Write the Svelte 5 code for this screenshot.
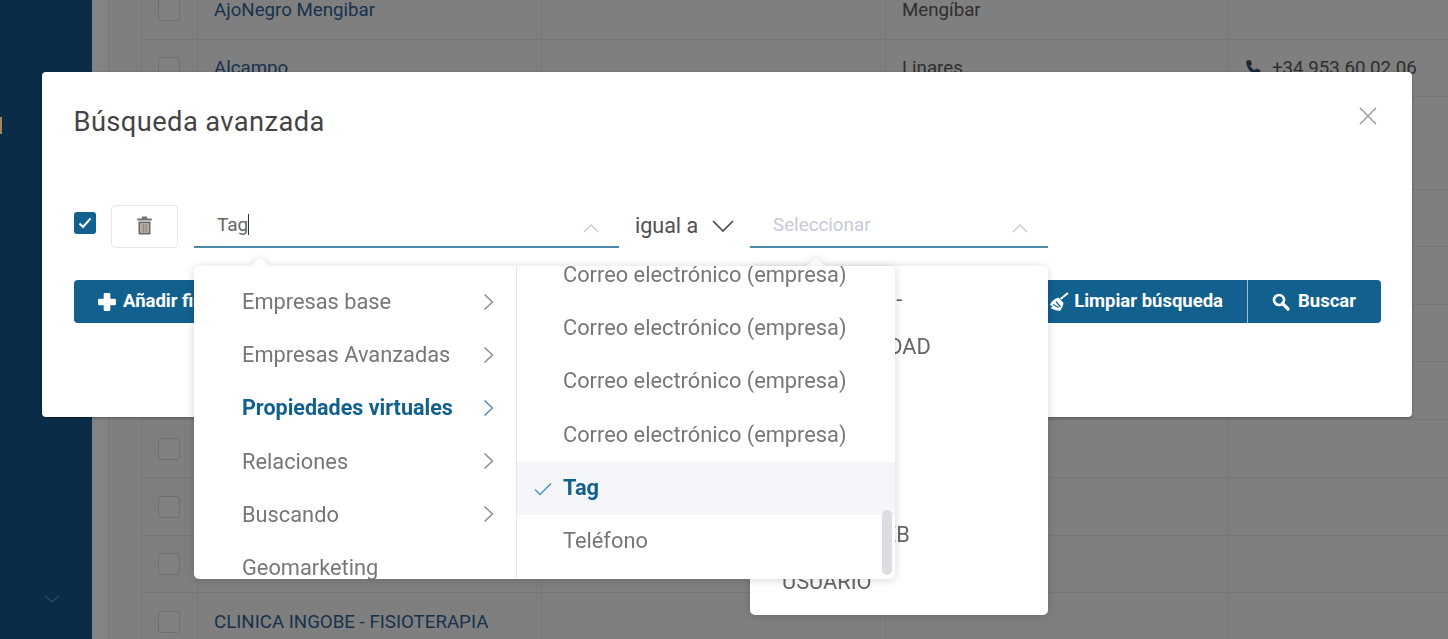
<script>
  const rows = [
    { h: 60, name: 'AjoNegro Mengibar', city: 'Mengíbar' },
    { h: 57, name: 'Alcampo', city: 'Linares', phone: '+34 953 60 02 06' },
    { h: 93 }, { h: 57 }, { h: 58 }, { h: 57 }, { h: 58 }, { h: 58 }, { h: 58 }, { h: 57 },
    { h: 58, name: 'CLINICA INGOBE - FISIOTERAPIA' }
  ];
  const groups = [
    { label: 'Empresas base', arrow: true },
    { label: 'Empresas Avanzadas', arrow: true },
    { label: 'Propiedades virtuales', arrow: true, active: true },
    { label: 'Relaciones', arrow: true },
    { label: 'Buscando', arrow: true },
    { label: 'Geomarketing', arrow: false }
  ];
  const fields = [
    { label: 'Correo electrónico (empresa)' },
    { label: 'Correo electrónico (empresa)' },
    { label: 'Correo electrónico (empresa)' },
    { label: 'Correo electrónico (empresa)' },
    { label: 'Tag', selected: true },
    { label: 'Teléfono' }
  ];
  const backOptions = ['EMPRESA   -', 'ÁREA ENTIDAD', 'NOMBRE', 'CIUDAD', 'PAÍS', 'PÁGINA WEB', 'USUARIO'];
</script>

<div class="page">
  <aside class="sidebar">
    <span class="mark"></span>
    <svg class="side-chevron" viewBox="0 0 16 8" width="16" height="8"><path d="M1 1l7 6 7-6" fill="none" stroke="#2f4c63" stroke-width="1.3"/></svg>
  </aside>
  <div class="gutter"></div>
  <main class="content">
    <div class="table">
      {#each rows as r}
        <div class="row" style="height:{r.h}px">
          <div class="cell check"><span class="box"></span></div>
          <div class="cell name">{r.name ?? ''}</div>
          <div class="cell"></div>
          <div class="cell city">{r.city ?? ''}</div>
          <div class="cell phone">
            {#if r.phone}
              <svg viewBox="0 0 16 16" width="18" height="18"><path d="M3.2 1l2.6 0 1.3 3.6-1.6 1.5c.8 1.7 2.2 3.1 3.9 3.9l1.5-1.6 3.6 1.3 0 2.6c-.3 1-1.2 1.6-2.2 1.5C6.6 13.3 2.700 9.400 2 3.200 1.900 2.200 2.300 1.300 3.200 1z" fill="#1d2a36"/></svg>
              <span>{r.phone}</span>
            {/if}
          </div>
        </div>
      {/each}
    </div>
  </main>

  <section class="modal">
    <h1>Búsqueda avanzada</h1>
    <svg class="close" viewBox="0 0 18 18" width="18" height="18"><path d="M1 1l16 16M17 1L1 17" stroke="#9a9ca0" stroke-width="1.5" fill="none"/></svg>

    <div class="filter">
      <span class="tick">
        <svg viewBox="0 0 14 12" width="14" height="12"><path d="M1.500 6.500l3.500 3.500 7.500-8.500" fill="none" stroke="#fff" stroke-width="2"/></svg>
      </span>
      <button class="trash" aria-label="Eliminar">
        <svg viewBox="0 0 15 19" width="15" height="19">
          <path d="M5.200 0.500h4.600l.7 2H14.800v2H.2v-2h4.300z" fill="#77716c"/>
          <path fill-rule="evenodd" d="M1.500 5.500h12v12a1 1 0 0 1-1 1h-10a1 1 0 0 1-1-1zM3.500 7.500v9h8v-9z" fill="#6d6a68"/>
          <path d="M3.500 7.500h8v9h-8z" fill="#b0a8a0"/>
          <path d="M6 7.500h1v9H6zM8.500 7.500h1v9h-1z" fill="#8b8682"/>
        </svg>
      </button>
      <div class="input tag-input">
        <span class="value">Tag<i class="caret"></i></span>
        <svg class="chev" viewBox="0 0 16 9" width="16" height="9"><path d="M1 8l7-7 7 7" fill="none" stroke="#c9ccd2" stroke-width="1.400"/></svg>
      </div>
      <div class="operator">
        <span>igual a</span>
        <svg viewBox="0 0 22 12" width="22" height="12"><path d="M1 1l10 10L21 1" fill="none" stroke="#4a4a4a" stroke-width="1.700"/></svg>
      </div>
      <div class="input sel-input">
        <span class="placeholder">Seleccionar</span>
        <svg class="chev" viewBox="0 0 16 9" width="16" height="9"><path d="M1 8l7-7 7 7" fill="none" stroke="#c9ccd2" stroke-width="1.400"/></svg>
      </div>
    </div>

    <div class="actions">
      <button class="btn add">
        <svg viewBox="0 0 18 18" width="20" height="20"><path d="M7 1h4a1 1 0 0 1 1 1v4h4a1 1 0 0 1 1 1v4a1 1 0 0 1-1 1h-4v4a1 1 0 0 1-1 1H7a1 1 0 0 1-1-1v-4H2a1 1 0 0 1-1-1V7a1 1 0 0 1 1-1h4V2a1 1 0 0 1 1-1z" fill="#fff"/></svg>
        Añadir filtro
      </button>
      <div class="btn-group">
        <button class="btn clear">
          <svg viewBox="0 0 20 20" width="20" height="20">
            <path d="M19 1l-7.500 6" stroke="#fff" stroke-width="2" fill="none"/>
            <path d="M9.500 5.500l5 5.500c-.5 3-1.500 5.500-3.500 8C7.500 18.500 4 17.500 1.500 16l2-1.500-2.500-1.500c1-3.500 4-6 8.500-7.500z" fill="#fff"/>
            <path d="M4 12.500l5.500 3M7 9.500l4.500 5.500" stroke="#12608e" stroke-width="1.200" fill="none"/>
          </svg>
          Limpiar búsqueda
        </button>
        <button class="btn search">
          <svg viewBox="0 0 18 18" width="18" height="18"><circle cx="7" cy="7" r="5" fill="none" stroke="#fff" stroke-width="2.600"/><path d="M10.500 10.500L16 16" stroke="#fff" stroke-width="3.200" stroke-linecap="round"/></svg>
          Buscar
        </button>
      </div>
    </div>

    <div class="options back">
      <span class="notch n2"></span>
      <div class="back-list">
        {#each backOptions as o}
          <div class="back-item">{o}</div>
        {/each}
      </div>
    </div>

    <div class="options cascader">
      <span class="notch n1"></span>
      <div class="col left">
        {#each groups as g}
          <div class="item" class:active={g.active}>
            <span>{g.label}</span>
            {#if g.arrow}
              <svg viewBox="0 0 10 18" width="10" height="18"><path d="M1.500 1.500l8 7.500-8 7.500" fill="none" stroke={g.active ? '#4f8fb5' : '#8a8a8a'} stroke-width="1.500"/></svg>
            {/if}
          </div>
        {/each}
      </div>
      <div class="col right">
        <div class="right-list">
          {#each fields as f}
            <div class="item" class:selected={f.selected}>
              {#if f.selected}
                <svg class="check-mark" viewBox="0 0 18 14" width="18" height="14"><path d="M1 7.500l5 5L17 1.500" fill="none" stroke="#4f93b8" stroke-width="1.500"/></svg>
              {/if}
              <span>{f.label}</span>
            </div>
          {/each}
        </div>
        <span class="thumb"></span>
      </div>
    </div>
  </section>
</div>

<style>
  :global(body) { margin: 0; overflow: hidden; }
  .page {
    position: relative; display: flex; width: 1448px; height: 639px; overflow: hidden;
    background: #7f7f7f; font-family: Roboto, "Liberation Sans", sans-serif; color: #4a4a4a;
  }
  .sidebar { position: relative; flex: 0 0 92px; background: #0a2c47; }
  .mark { position: absolute; left: 0; top: 117px; width: 2px; height: 17px; background: #a08560; }
  .side-chevron { position: absolute; left: 44px; top: 595px; }
  .gutter { flex: 0 0 16px; background: #838383; border-right: 1px solid #787878; }
  .content { flex: 1; padding-left: 32px; overflow: hidden; }
  .table { margin-top: -20px; }
  .row {
    display: grid; grid-template-columns: 56px 344px 344px 343px 1fr;
    border-bottom: 1px solid #767676; box-sizing: border-box;
    border-left: 1px solid #787878;
  }
  .cell { display: flex; align-items: center; border-right: 1px solid #787878; font-size: 18.700px; color: #2e2e2e; padding-left: 16px; white-space: nowrap; min-width: 0; }
  .box { width: 20px; height: 20px; border: 1px solid #6f6f6f; border-radius: 3px; background: #808080; }
  .name { color: #17324e; }
  .phone { border-right: 0; gap: 10px; padding-left: 15px; }

  .modal {
    position: absolute; left: 42px; top: 72px; width: 1370px; height: 345px;
    background: #fff; border-radius: 4px; box-shadow: 0 1px 3px rgba(0,0,0,.35);
  }
  h1 { position: absolute; left: 31.500px; top: 33px; margin: 0; font-size: 27.300px; line-height: 34px; font-weight: 400; color: #444; letter-spacing: .4px; }
  .close { position: absolute; left: 1317px; top: 35px; }
  .filter { position: absolute; left: 32px; top: 133px; display: flex; align-items: flex-start; }
  .tick { width: 22px; height: 22px; margin-top: 7px; background: #12608e; border-radius: 3px; display: flex; align-items: center; justify-content: center; }
  .trash { width: 67px; height: 43px; margin-left: 15px; padding: 0 0 3px; background: #fff; border: 1px solid #e6e8ee; border-radius: 4px; display: flex; align-items: center; justify-content: center; }
  .input { position: relative; height: 43px; box-sizing: border-box; border-bottom: 2px solid #4d87aa; display: flex; align-items: center; padding: 0 0 2px 23px; }
  .tag-input { width: 425px; margin-left: 16px; font-size: 19px; color: #666; }
  .sel-input { width: 298px; }
  .value { display: inline-flex; align-items: center; }
  .caret { display: inline-block; width: 1px; height: 21px; background: #333; }
  .chev { position: absolute; right: 20px; top: 19px; }
  .operator { display: flex; align-items: center; gap: 14px; width: 131px; height: 41px; box-sizing: border-box; padding-left: 16px; font-size: 21.500px; color: #4f4f4f; }
  .placeholder { font-size: 18.800px; color: #c6cad4; }

  .actions { position: absolute; left: 32px; right: 31px; top: 208px; display: flex; justify-content: space-between; }
  .btn { height: 43px; padding: 0 24px; display: inline-flex; align-items: center; gap: 7px; background: #12608e; color: #fff; border: 0; border-radius: 4px; font: 700 18.500px/1 Roboto, "Liberation Sans", sans-serif; white-space: nowrap; }
  .add { padding-left: 23px; gap: 6px; }
  .clear { gap: 5px; }
  .search { gap: 8px; padding: 0 25px 0 24px; }
  .btn-group { display: flex; }
  .btn-group .btn:first-child { border-radius: 4px 0 0 4px; border-right: 1px solid #9fc0d4; }
  .btn-group .btn:last-child { border-radius: 0 4px 4px 0; }

  .options { position: absolute; background: #fff; border-radius: 5px; filter: drop-shadow(0 1px 4px rgba(0,0,0,.16)); font-size: 21.800px; color: #777; }
  .notch { position: absolute; top: -8px; width: 0; height: 0; border-left: 10px solid transparent; border-right: 10px solid transparent; border-bottom: 8px solid #fff; }
  .n1 { left: 56px; }
  .n2 { left: 56px; }
  .back { left: 708px; top: 194px; width: 298px; height: 349px; }
  .back-list { padding: 10px 0 0 32px; height: 100%; overflow: hidden; box-sizing: border-box; }
  .back-item { height: 47px; line-height: 47px; font-size: 21.800px; white-space: pre; color: #666; }
  .cascader { left: 152px; top: 194px; width: 701px; height: 313px; display: flex; }
  .col { overflow: hidden; height: 100%; border-radius: 5px; }
  .left { width: 323px; flex: none; padding-top: 9px; box-sizing: border-box; border-right: 1px solid #e6e8ee; border-radius: 5px 0 0 5px; }
  .right { position: relative; flex: 1; border-radius: 0 5px 5px 0; }
  .right-list { margin-top: -17px; }
  .item { height: 53.200px; display: flex; align-items: center; box-sizing: border-box; white-space: nowrap; position: relative; }
  .left .item { padding: 0 23px 0 48px; justify-content: space-between; }
  .right .item { padding: 0 0 2px 46px; }
  .active { color: #12608e; font-weight: 700; font-size: 21.500px; }
  .selected { background: #f4f6fa; color: #12608e; font-weight: 700; }
  .check-mark { position: absolute; left: 17px; top: 20px; }
  .thumb { position: absolute; right: 3px; bottom: 4px; width: 10px; height: 65px; background: #dcdde0; border-radius: 5px; }
</style>
